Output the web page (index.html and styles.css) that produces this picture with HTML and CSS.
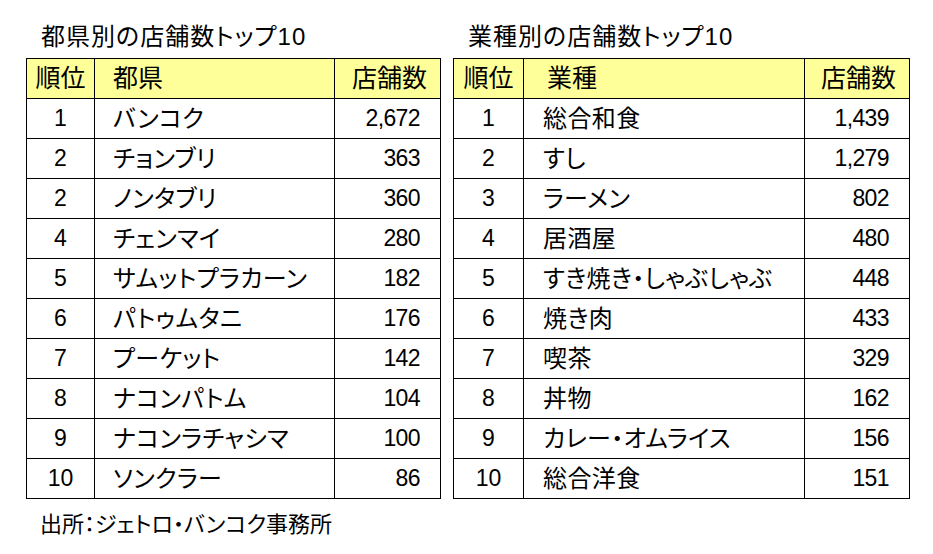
FILE: index.html
```html
<!DOCTYPE html>
<html lang="ja">
<head>
<meta charset="utf-8">
<link rel="stylesheet" href="styles.css">
</head>
<body>
<div class="page">
  <div class="panels">
    <section class="panel panel-left">
      <h2 class="title">都県別の店舗数トップ10</h2>
      <table class="rank">
        <colgroup><col class="c-rank"><col class="c-name"><col class="c-num"></colgroup>
        <thead>
          <tr><th class="rk">順位</th><th class="nm">都県</th><th class="nu">店舗数</th></tr>
        </thead>
        <tbody>
          <tr><td class="rk">1</td><td class="nm">バンコク</td><td class="nu">2,672</td></tr>
          <tr><td class="rk">2</td><td class="nm">チョンブリ</td><td class="nu">363</td></tr>
          <tr><td class="rk">2</td><td class="nm">ノンタブリ</td><td class="nu">360</td></tr>
          <tr><td class="rk">4</td><td class="nm">チェンマイ</td><td class="nu">280</td></tr>
          <tr><td class="rk">5</td><td class="nm">サムットプラカーン</td><td class="nu">182</td></tr>
          <tr><td class="rk">6</td><td class="nm">パトゥムタニ</td><td class="nu">176</td></tr>
          <tr><td class="rk">7</td><td class="nm">プーケット</td><td class="nu">142</td></tr>
          <tr><td class="rk">8</td><td class="nm">ナコンパトム</td><td class="nu">104</td></tr>
          <tr><td class="rk">9</td><td class="nm">ナコンラチャシマ</td><td class="nu">100</td></tr>
          <tr><td class="rk">10</td><td class="nm">ソンクラー</td><td class="nu">86</td></tr>
        </tbody>
      </table>
    </section>
    <section class="panel panel-right">
      <h2 class="title">業種別の店舗数トップ10</h2>
      <table class="rank">
        <colgroup><col class="c-rank"><col class="c-name"><col class="c-num"></colgroup>
        <thead>
          <tr><th class="rk">順位</th><th class="nm">業種</th><th class="nu">店舗数</th></tr>
        </thead>
        <tbody>
          <tr><td class="rk">1</td><td class="nm">総合和食</td><td class="nu">1,439</td></tr>
          <tr><td class="rk">2</td><td class="nm">すし</td><td class="nu">1,279</td></tr>
          <tr><td class="rk">3</td><td class="nm">ラーメン</td><td class="nu">802</td></tr>
          <tr><td class="rk">4</td><td class="nm">居酒屋</td><td class="nu">480</td></tr>
          <tr><td class="rk">5</td><td class="nm">すき焼き・しゃぶしゃぶ</td><td class="nu">448</td></tr>
          <tr><td class="rk">6</td><td class="nm">焼き肉</td><td class="nu">433</td></tr>
          <tr><td class="rk">7</td><td class="nm">喫茶</td><td class="nu">329</td></tr>
          <tr><td class="rk">8</td><td class="nm">丼物</td><td class="nu">162</td></tr>
          <tr><td class="rk">9</td><td class="nm">カレー・オムライス</td><td class="nu">156</td></tr>
          <tr><td class="rk">10</td><td class="nm">総合洋食</td><td class="nu">151</td></tr>
        </tbody>
      </table>
    </section>
  </div>
  <p class="source">出所：ジェトロ・バンコク事務所</p>
</div>
</body>
</html>
```
FILE: styles.css
```css
html, body {
  margin: 0;
  padding: 0;
  background: #ffffff;
}
body {
  font-family: "Liberation Sans", "Noto Sans CJK JP", sans-serif;
  color: #000000;
  font-feature-settings: "palt";
}
.page {
  padding: 22px 0 0 26px;
}
.panels {
  display: flex;
  gap: 12px;
  align-items: flex-start;
}
.title {
  margin: 0 0 6px 15px;
  font-size: 24px;
  letter-spacing: 1px;
  font-weight: 400;
  line-height: 30px;
  height: 30px;
  white-space: nowrap;
}
.rank {
  border-collapse: collapse;
  table-layout: fixed;
}
.panel-left .rank { width: 414px; }
.panel-right .rank { width: 456px; }
.panel-left .c-rank { width: 68px; }
.panel-left .c-name { width: 240px; }
.panel-left .c-num { width: 106px; }
.panel-right .c-rank { width: 70px; }
.panel-right .c-name { width: 281px; }
.panel-right .c-num { width: 105px; }
.rank th, .rank td {
  border: 1px solid #000000;
  height: 39px;
  padding: 0;
  font-weight: 400;
  white-space: nowrap;
  line-height: 39px;
}
.rank th {
  background: #ffff99;
  font-size: 25px;
}
.rank td {
  font-size: 24px;
  letter-spacing: 0.4px;
}
.rank td.rk {
  font-size: 23px;
  letter-spacing: 0;
}
.rank td.nu {
  font-size: 23px;
  letter-spacing: -0.6px;
}
.rk { text-align: center; }
.nm { text-align: left; padding-left: 18px !important; }
.nu { text-align: right; padding-right: 20px !important; }
.rank th.nu { padding-right: 13px !important; }
.panel-right .rank th.nm { padding-left: 23px !important; }
.panel-right .rank td.nm { padding-left: 19px !important; }
.source {
  margin: 12px 0 0 14px;
  font-size: 22px;
  line-height: 28px;
}
```
